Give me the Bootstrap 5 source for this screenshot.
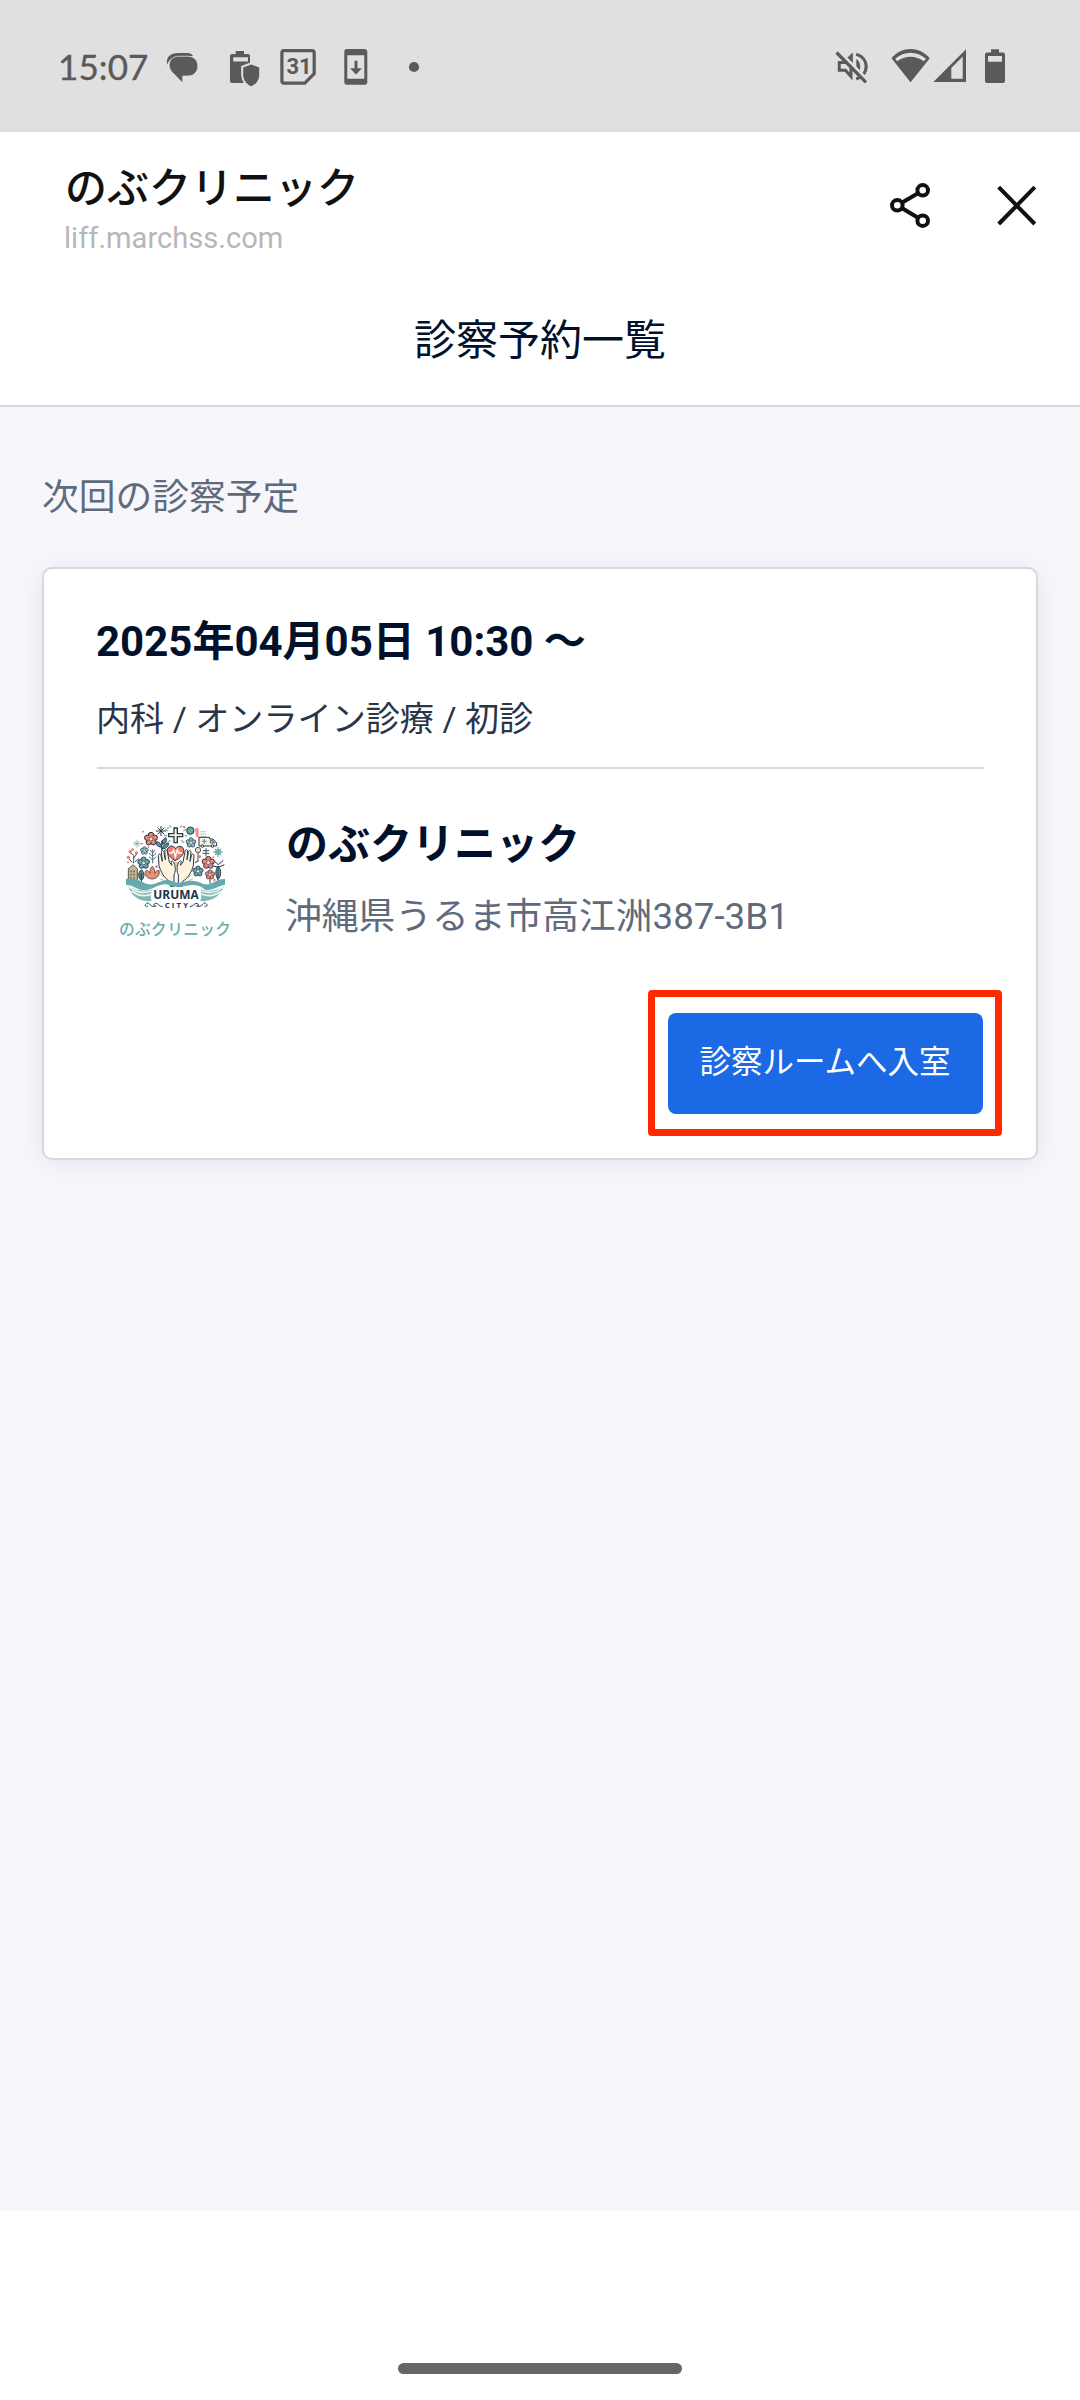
<!DOCTYPE html>
<html lang="ja">
<head>
<meta charset="utf-8">
<meta name="viewport" content="width=device-width, initial-scale=1">
<title>診察予約一覧</title>
<link href="https://cdn.jsdelivr.net/npm/bootstrap@5.3.0/dist/css/bootstrap.min.css" rel="stylesheet">
<style>
  body { font-family: Roboto, "Noto Sans CJK JP", sans-serif; color: #02112b; height: 2400px; overflow: hidden; }
  svg { display: block; flex: none; }
  .status-bar { height: 132px; background: #e0e0e0; color: #5a5a5a; padding: 0 72px 0 58px; }
  .clock { font: 400 35px/54px Lato, sans-serif; letter-spacing: .1px; width: 104px; -webkit-text-stroke: .4px #5a5a5a; }
  .app-bar { height: 148px; color: #111; padding: 27px 40px 0 64px; }
  .app-name { font-size: 42px; line-height: 60px; font-weight: 500; padding-left: 1px; }
  .app-host { font-size: 29.1px; line-height: 36px; color: #b7b7b7; margin-top: 1px; }
  .page-title { height: 127px; font-size: 42px; line-height: 60px; padding-top: 31px; border-bottom: 2px solid #d7d9e1; }
  .page-body { height: 1804px; background: #f6f6fb; padding: 67px 42px 0; }
  .section-title { font-size: 36.75px; line-height: 48px; color: #5f6b7d; margin-bottom: 45px; }
  .visit { height: 593px; border: 2px solid #d7d9e1; border-radius: 10px; box-shadow: 0 3px 28px rgba(20,40,80,.075); padding: 43px 52px 0 53px; }
  .visit-date { font-size: 42px; line-height: 60px; font-weight: 700; margin-left: -1px; }
  .visit-kind { font-size: 34.125px; line-height: 48px; color: #28354b; padding: 23px 0 24px; border-bottom: 2px solid #d7d9e1; text-indent: -1px; }
  .clinic { padding: 41px 0 0 3px; gap: 36px; }
  .clinic-name { font-size: 42px; line-height: 60px; font-weight: 700; margin-top: 5px; }
  .clinic-address { font-size: 36.75px; line-height: 48px; color: #5f6b7d; margin: 18px 0 0 -1px; }
  .enter-frame { width: 354px; height: 146px; border: 7px solid #ff2900; border-radius: 4px; margin: 40px -18px 0 0; }
  .enter-btn { width: 315px; height: 101px; border-radius: 8px; background: #1b69e5; color: #fff; border: 0; font-size: 31.5px; }
  .home-zone { height: 189px; padding-top: 152px; }
  .home-bar { width: 284px; height: 11px; border-radius: 6px; background: #666; }
</style>
</head>
<body>
<header class="status-bar d-flex align-items-center">
  <div class="clock">15:07</div>
  <svg width="50" height="54" viewBox="162 39 50 54" fill="#5a5a5a">
    <path d="M167.500 65C165 57 171 53 178 53H187C190 53 192 54 193 56H181C173 56 168 60 167.500 65Z"/>
    <path d="M179 56.200H188C194 56.200 197.800 60.500 197.800 66S194 76 188 76H182.700V83L172.500 72.500C166 65.500 170 56.200 179 56.200Z" stroke="#e0e0e0" stroke-width=".7"/>
  </svg>
  <svg width="58" height="54" viewBox="212 39 58 54" fill="#5a5a5a">
    <path fill-rule="evenodd" d="M235.700 54V51H244V54H248Q250 54 250 56V83H232Q230 83 230 81V56Q230 54 232 54ZM233.300 57.200V61.500H248V57.200Z"/>
    <path d="M251.200 64.500L259.200 67.500V75C259.200 80 256 84.500 251.200 86.200C246.500 84.500 243.200 80 243.200 75V67.500Z" stroke="#e0e0e0" stroke-width="4" paint-order="stroke"/>
  </svg>
  <svg width="60" height="54" viewBox="270 39 60 54">
    <path d="M284 50.600H312Q314.200 50.600 314.200 53V73.500L304.800 83.100H284Q281.900 83.100 281.900 81V53Q281.900 50.600 284 50.600Z" fill="none" stroke="#5a5a5a" stroke-width="3.200"/>
    <text x="286.500" y="74.200" font-family="Roboto, sans-serif" font-weight="700" font-size="22" fill="#5a5a5a">31</text>
  </svg>
  <svg width="50" height="54" viewBox="330 39 50 54" fill="#5a5a5a">
    <path fill-rule="evenodd" d="M347 49H365Q367.300 49 367.300 51.500V82Q367.300 84.700 365 84.700H347Q344.300 84.700 344.300 82V51.500Q344.300 49 347 49ZM347.300 55.300V78.700H364.300V55.300Z"/>
    <path d="M354.500 60.700H357.500V68.300H362L356 74.500L350 68.300H354.500Z"/>
  </svg>
  <svg width="50" height="54" viewBox="380 39 50 54" fill="#5a5a5a"><circle cx="414" cy="67" r="5.100"/></svg>
  <div class="ms-auto d-flex">
    <svg width="50" height="54" viewBox="830 39 50 54" fill="none" stroke="#5a5a5a" stroke-width="3.200">
      <path d="M839.300 62.500H845L851 57V76.500L845.500 70.200H839.300Z" stroke-width="3"/>
      <path d="M852.700 52.500V63L847 58Z" fill="#5a5a5a" stroke="none"/>
      <path d="M856.200 54.200C869.500 58 869.500 75 856.200 79"/>
      <path d="M856.300 59V75.500C861.500 72 861.500 62 856.300 59Z" fill="#5a5a5a" stroke="none"/>
      <path d="M839.500 51.500L869 81.500" stroke="#e0e0e0" stroke-width="3"/>
      <path d="M836.500 52.500L866 82.300"/>
    </svg>
    <svg width="51" height="54" viewBox="880 39 51 54" fill="#5a5a5a">
      <path fill-rule="evenodd" d="M910.500 82.200L891.500 58.300C902 46 919 46 929.800 58.300ZM895.200 58.800L897.300 61.300C905 55.300 916 55.300 923.700 61.300L926 58.800C917 50.800 904 50.800 895.200 58.800Z"/>
    </svg>
    <svg width="49" height="54" viewBox="931 39 49 54" fill="#5a5a5a"><path fill-rule="evenodd" d="M933.300 82L966 49.300V82ZM951.300 68V78.700H962.700V56.500Z"/></svg>
    <svg width="28" height="54" viewBox="980 39 28 54" fill="#5a5a5a"><path fill-rule="evenodd" d="M991 52.500V49.300H999V52.500H1003Q1005 52.500 1005 54.500V81Q1005 83 1003 83H987Q985 83 985 81V54.500Q985 52.500 987 52.500ZM988 56V61.700H1002V56Z"/></svg>
  </div>
</header>

<nav class="app-bar d-flex bg-white">
  <div class="flex-grow-1">
    <div class="app-name">のぶクリニック</div>
    <div class="app-host">liff.marchss.com</div>
  </div>
  <svg width="106" height="70" viewBox="880 159 106 70" fill="none" stroke="#111" stroke-width="4" role="img" aria-label="share">
    <circle cx="897.300" cy="205.300" r="5.300"/><circle cx="922.700" cy="190.300" r="5.300"/><circle cx="922.700" cy="220.700" r="5.300"/>
    <path d="M902.200 202.500L918 193.200M902.200 208.200L918 217.800"/>
  </svg>
  <svg width="54" height="70" viewBox="986 159 54 70" stroke="#111" stroke-width="4" role="img" aria-label="close"><path d="M998.700 187.200L1034.800 224M1034.800 187.200L998.700 224"/></svg>
</nav>
<h1 class="page-title fw-normal text-center m-0 bg-white">診察予約一覧</h1>

<main class="page-body">
  <h2 class="section-title fw-normal">次回の診察予定</h2>
  <article class="visit bg-white d-flex flex-column">
    <div class="visit-date">2025年04月05日 10:30 〜</div>
    <div class="visit-kind">内科 / オンライン診療 / 初診</div>
    <div class="clinic d-flex">
      <svg width="150" height="140" viewBox="0 0 450 420" role="img" aria-label="のぶクリニック">
        <defs>
          <g id="bloom"><g stroke="#25384d" stroke-width="3"><circle cy="-12" r="8"/><circle cx="11.400" cy="-3.700" r="8"/><circle cx="7" cy="9.700" r="8"/><circle cx="-7" cy="9.700" r="8"/><circle cx="-11.400" cy="-3.700" r="8"/></g><circle r="10"/><circle r="6" fill="#f7ead2" stroke="#25384d" stroke-width="2"/></g>
          <g id="star" fill="none" stroke-width="3"><path d="M0-15V15M-15 0H15M-10-10L10 10M-10 10L10-10"/></g>
          <g id="sprig" fill="none" stroke-width="3"><path d="M0 22V-20M0 12L-11 2M0 12L11 2M0 1L-11-9M0 1L11-9M0-9L-8-18M0-9L8-18"/></g>
        </defs>
        <use href="#bloom" x="153" y="87" fill="#ee8470"/>
        <use href="#bloom" transform="translate(131 159) scale(.9)" fill="#63aaa8"/>
        <use href="#bloom" transform="translate(325 158) scale(.95)" fill="#ee8470"/>
        <use href="#bloom" transform="translate(273 98) scale(.75)" fill="#83bbb5"/>
        <use href="#bloom" transform="translate(133 122) scale(.6)" fill="#83bbb5"/>
        <use href="#bloom" transform="translate(330 194) scale(.72)" fill="#ee8470"/>
        <use href="#bloom" transform="translate(294 184) scale(.8)" fill="#63a6a4"/>
        <use href="#star" x="183" y="63" stroke="#25384d"/>
        <use href="#star" transform="translate(111 101) scale(.8)" stroke="#7aa9b2"/>
        <use href="#star" transform="translate(354 126)" stroke="#5b9c9e"/>
        <circle cx="354" cy="126" r="9" fill="#70acaa"/>
        <use href="#sprig" x="158" y="138" stroke="#536878"/>
        <path d="M185 122V92M185 111C170 112 168 101 170 95C180 97 184 103 185 111ZM187 103C202 99 200 89 198 83C189 87 186 92 187 103ZM187 117C200 115 207 107 205 99C195 101 188 107 187 117" fill="#5f9696" stroke="#25384d" stroke-width="3"/>
        <!-- radiating medical cross -->
        <path d="M240 53L246 46M214 53L208 46M250 64L259 57M204 64L195 57M253 77H262M201 77H192M243 91L252 98M211 91L202 98" stroke="#75b7b6" stroke-width="4"/>
        <path d="M222 54H232V71H248V80H232V98H222V80H206V71H222Z" fill="#fff4df" stroke="#25384d" stroke-width="4"/>
        <circle cx="271" cy="62" r="11" fill="#66aaa6" stroke="#25384d" stroke-width="3"/>
        <path d="M285 55H296V82H288Z" fill="#ee9583"/>
        <path d="M302 65H318M302 72H318M302 79H318" stroke="#65777f" stroke-width="2.500" stroke-dasharray="3 3"/>
        <!-- ambulance -->
        <path d="M297 82H329V87H339L350 99V108H297Z" fill="#fff2de" stroke="#25384d" stroke-width="3"/>
        <path d="M331 91H338L344 99H331Z" fill="#95c8cc" stroke="#25384d" stroke-width="2"/>
        <path d="M313 87V101M306 94H320" stroke="#5aa5ad" stroke-width="4"/>
        <circle cx="307" cy="108" r="4" fill="#fff" stroke="#25384d" stroke-width="3"/><circle cx="338" cy="108" r="4" fill="#fff" stroke="#25384d" stroke-width="3"/>
        <path d="M318 115V139M308 122H328M308 130H328" stroke="#3c5363" stroke-width="3"/>
        <circle cx="294" cy="120" r="8" fill="#eedcb8" stroke="#52626a" stroke-width="3"/><path d="M294 128V156M294 152L285 158M294 143L303 138" stroke="#7c786e" stroke-width="4"/>
        <!-- berry branch -->
        <path d="M101 160V136L86 125M101 144L112 130M97 158L85 144M105 156L117 145" fill="none" stroke="#3c5363" stroke-width="3"/>
        <g fill="#e98271"><circle cx="85" cy="142" r="5"/><circle cx="91" cy="125" r="5"/><circle cx="109" cy="129" r="5"/><circle cx="98" cy="119" r="4"/><circle cx="84" cy="157" r="3"/><circle cx="126" cy="101" r="3"/><circle cx="129" cy="65" r="3"/><circle cx="204" cy="54" r="3"/><circle cx="252" cy="51" r="4"/><circle cx="145" cy="111" r="3"/><circle cx="298" cy="140" r="4"/><circle cx="340" cy="142" r="3"/><circle cx="170" cy="170" r="4"/><circle cx="343" cy="210" r="4"/></g>
        <!-- tower and trees -->
        <path d="M85 220V176L92 171L99 164L106 171L112 176V220Z" fill="#c9b48d" stroke="#51544f" stroke-width="3"/>
        <path d="M91 184H106M91 194H106M91 204H106" stroke="#4c5758" stroke-width="5" stroke-dasharray="4 5"/>
        <path d="M124 179C112 188 115 206 124 210C134 206 135 188 124 179Z" fill="#5c858c" stroke="#25384d" stroke-width="3"/><path d="M124 190V218" stroke="#25384d" stroke-width="3"/>
        <path d="M156 207C134 204 132 186 139 181C145 182 148 185 150 190C149 178 154 171 157 169C163 175 165 183 164 190C167 183 172 181 177 181C180 192 175 205 156 207Z" fill="#e39378" stroke="#754f49" stroke-width="3"/>
        <path d="M354 168C345 180 346 199 354 208C363 200 366 180 354 168Z" fill="#789f9b" stroke="#25384d" stroke-width="3"/><path d="M354 218V176M344 154L355 164L370 151M355 172L373 164M355 172L340 168M330 207V220" fill="none" stroke="#25384d" stroke-width="3"/>
        <!-- hands holding a heart -->
        <path d="M225 152C205 140 195 121 207 111C215 105 223 109 227 116C234 106 246 107 250 116C256 130 241 145 225 152Z" fill="#f07e71" stroke="#25384d" stroke-width="3"/>
        <path d="M207 129H216L221 120L226 140L232 119L236 129H247" fill="none" stroke="#fff" stroke-width="4"/>
        <path d="M229 169L221 161C219 154 226 153 229 157C232 153 239 155 237 161Z" fill="#e1c498"/>
        <path id="hand" d="M211 229L209 214C193 205 183 187 177 167L175 137C176 130 182 130 183 137L187 154L184 126C185 119 191 120 192 127L196 149L194 122C196 117 201 119 202 125L208 156L216 166C211 153 214 148 221 157C229 174 226 185 222 195V229Z" fill="#fff2dc" stroke="#25384d" stroke-width="3"/>
        <use href="#hand" transform="translate(457 0) scale(-1 1)"/>
        <path d="M181 193L192 203M179 206L191 211M275 193L264 204M279 206L267 212" stroke="#d6b88b" stroke-width="3"/>
        <!-- water -->
        <path d="M78 207C99 203 111 208 134 219C161 233 181 207 205 210C221 212 228 222 246 217C267 209 291 211 308 221C332 230 349 205 375 207V224C354 227 338 244 315 239C297 224 280 222 256 228C235 232 221 232 204 224C181 217 157 240 134 241C114 241 98 224 78 225Z" fill="#67a9ac"/>
        <path d="M85 229C110 241 131 246 158 238C151 251 150 263 155 273C121 277 95 261 85 229Z" fill="#80b8b8"/>
        <path d="M372 229C351 242 328 247 302 238C306 247 305 263 301 273C334 277 359 260 372 229Z" fill="#80b8b8"/>
        <path d="M88 231C112 249 134 251 155 242M95 243C119 260 136 261 154 252M369 231C350 248 328 251 305 243M362 244C342 260 325 260 305 252" fill="none" stroke="#eff7f4" stroke-width="5"/>
        <text x="160" y="267" textLength="136" lengthAdjust="spacingAndGlyphs" font-family="Open Sans, sans-serif" font-size="36" font-weight="700" fill="#233348">URUMA</text>
        <text x="194" y="293" textLength="70" font-family="Open Sans, sans-serif" font-size="23" font-weight="700" fill="#233348">CITY</text>
        <path d="M188 290C177 290 174 278 166 280C156 284 164 294 169 287M166 287C151 297 151 274 140 280C131 285 138 294 144 287M269 290C280 290 283 278 291 280C301 284 293 294 288 287M291 287C306 297 306 274 317 280C326 285 319 294 313 287" fill="none" stroke="#33475a" stroke-width="3"/>
        <text x="57" y="375" textLength="336" font-family="Noto Sans CJK JP, sans-serif" font-size="47" font-weight="500" fill="#69adb0">のぶクリニック</text>
      </svg>
      <div>
        <div class="clinic-name">のぶクリニック</div>
        <div class="clinic-address">沖縄県うるま市高江洲387-3B1</div>
      </div>
    </div>
    <div class="enter-frame align-self-end d-flex align-items-center justify-content-center">
      <button type="button" class="btn enter-btn p-0">診察ルームへ入室</button>
    </div>
  </article>
</main>
<footer class="home-zone bg-white"><div class="home-bar mx-auto"></div></footer>
<script src="https://cdn.jsdelivr.net/npm/bootstrap@5.3.0/dist/js/bootstrap.bundle.min.js"></script>
</body>
</html>
